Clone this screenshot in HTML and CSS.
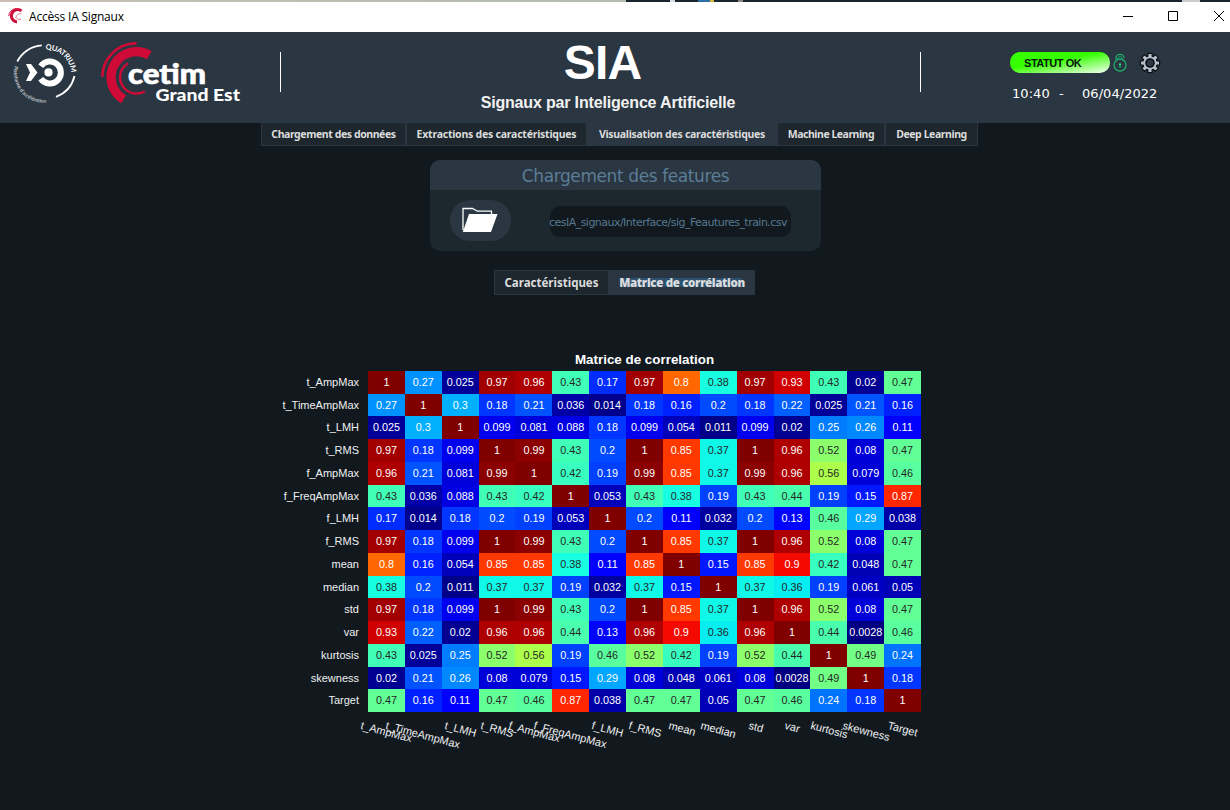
FILE: index.html
```html
<!DOCTYPE html>
<html lang="fr">
<head>
<meta charset="utf-8">
<title>Accèss IA Signaux</title>
<link rel="stylesheet" href="styles.css">
</head>
<body>
<div class="desktop-strip"><i class="s1"></i><i class="s2"></i><i class="s3"></i><i class="s4"></i><i class="s5"></i></div>
<div class="titlebar">
  <svg class="app-icon" width="16" height="16" viewBox="0 0 16 16" fill="none" stroke="#d0103c">
    <path d="M13.500 3A6.200 6.200 0 1 0 9 14" stroke-width="3"/>
    <path d="M.8 8A7.500 7.500 0 0 1 8 .8" stroke-width="1"/>
    <path d="M13.500 6A4 4 0 0 0 8 9.500Q9 12 13 11.500" stroke-width="1" stroke="#e47a92"/>
  </svg>
  <span class="app-name">Accèss IA Signaux</span>
  <svg class="controls" width="102" height="12" viewBox="0 0 102 12" fill="none" stroke="#000">
    <path d="M0 5.500h10M45.500 .5h9v9h-9zM91 0l10 10M101 0l-10 10"/>
  </svg>
</div>
<header class="header">
  <svg class="logos" width="260" height="91" viewBox="0 32 260 91">
    <defs>
      <path id="arcTop" d="M45.600 49.800A24 24 0 0 1 70.800 77"/>
      <path id="arcBottom" d="M14.600 66A30 30 0 0 0 55 100.500"/>
    </defs>
    <g fill="none" stroke="#fff">
      <path d="M17.300 61.500A29.500 29.500 0 0 1 41.800 45.300M74.500 76A29.500 29.500 0 0 1 56 96.800" stroke-width="1.800"/>
      <path d="M40.800 66.300A11 11 0 1 1 40.800 78.700" stroke-width="6"/>
    </g>
    <circle cx="48.500" cy="72.400" r="4.100" fill="#fff"/>
    <path d="M26 64h5l6.500 8.500-6.500 8.500h-5l4-8.500z" fill="#fff"/>
    <text class="quatrium"><textPath href="#arcTop" textLength="38">QUATRIUM</textPath></text>
    <text class="plateforme"><textPath href="#arcBottom" textLength="56">Plateforme d'accélération</textPath></text>
    <g fill="none" stroke="#cf0a37">
      <path d="M102.300 77A33.800 33.800 0 0 1 136.500 43.400" stroke-width="2.600"/>
      <path d="M149.300 55.200A25.400 25.400 0 1 0 123.700 99.200" stroke-width="9.300"/>
      <path d="M128 63.200A16.300 16.300 0 1 0 144.800 91.200" stroke-width="2.400"/>
    </g>
    <text class="cetim" x="128" y="83.500" textLength="78" lengthAdjust="spacingAndGlyphs">cetim</text>
    <text class="grandest" x="155.500" y="100.500" textLength="84.500" lengthAdjust="spacingAndGlyphs">Grand Est</text>
  </svg>
  <div class="headline">
    <h1>SIA</h1>
    <p>Signaux par Inteligence Artificielle</p>
  </div>
  <div class="status">
    <div class="status-row">
      <span class="pill">STATUT OK</span>
      <svg class="lock" width="14" height="20" viewBox="0 0 14 20" fill="none" stroke="#1fae6c" stroke-width="1.300">
        <circle cx="7" cy="12" r="6"/>
        <path d="M3 6.500V5.300A4 4 0 0 1 11 5.300"/>
        <path d="M4.800 6V5.800A2.200 2.200 0 0 1 9.200 5.800V6.500" stroke-width=".8"/>
        <circle cx="7" cy="11.500" r="1.200" fill="#27d07f" stroke="none"/><path d="M7 12v3"/>
      </svg>
      <svg class="gear" width="22" height="22" viewBox="-11 -11 22 22">
        <g id="gear"></g>
        <circle r="4" fill="#2a3641" stroke="#0b0d10" stroke-width="1.600"/>
      </svg>
    </div>
    <div class="clock"><span class="time">10:40</span><span class="dash">-</span><span>06/04/2022</span></div>
  </div>
</header>
<nav class="tabs">
  <span class="tab t1">Chargement des données</span>
  <span class="tab t2">Extractions des caractéristiques</span>
  <span class="tab t3 active">Visualisation des caractéristiques</span>
  <span class="tab t4">Machine Learning</span>
  <span class="tab t5">Deep Learning</span>
</nav>
<main>
  <section class="panel">
    <h2><span>Chargement des features</span></h2>
    <div class="panel-body">
      <button class="open" type="button" aria-label="Ouvrir">
        <svg width="36" height="26" viewBox="0 0 36 26">
          <path d="M1 23V1.500H10.500L15.500 4.200H29.500V7" fill="none" stroke="#fff" stroke-width="1.300"/>
          <path d="M7 7H35.500L29 25H.8z" fill="#fff"/>
        </svg>
      </button>
      <div class="path"><span>cesIA_signaux/Interface/sig_Feautures_train.csv</span></div>
    </div>
  </section>
  <nav class="subtabs">
    <span class="subtab">Caractéristiques</span>
    <span class="subtab active"><b>Matrice de corrélation</b></span>
  </nav>
  <figure class="chart">
    <figcaption>Matrice de correlation</figcaption>
    <div class="ylabels" id="ylabels"></div>
    <div class="matrix" id="matrix"></div>
    <div class="xlabels" id="xlabels"></div>
  </figure>
</main>
<script src="app.js"></script>
</body>
</html>
```

FILE: styles.css
```css
* { box-sizing: border-box; }
body {
  margin: 0;
  width: 1230px;
  height: 810px;
  overflow: hidden;
  background: #11191f;
  color: #fff;
  font-family: "Liberation Sans", Arial, sans-serif;
}
h1, h2, p, figure { margin: 0; }

.desktop-strip { height: 2px; display: flex; background: linear-gradient(90deg, #cdbdb9, #bcc0b5 35%, #b3bbb0) 0 0 / 626px 2px no-repeat #1b2530; padding-left: 670px; }
.desktop-strip i { height: 2px; }
.s1 { width: 5px; background: #ddd; margin-right: 23px; }
.s2 { width: 12px; background: #2a6fa8; }
.s3 { width: 4px; background: #d6b332; margin-right: 24px; }
.s4 { width: 5px; background: #8a8584; margin-right: 439px; }
.s5 { width: 18px; background: #ccc; }

.titlebar {
  height: 30px;
  display: flex;
  align-items: center;
  background: #fff;
  color: #000;
  padding: 0 5px 0 8px;
}
.app-icon { margin-top: -2px; }
.app-name { margin-left: 5px; font: 12px/16px "Open Sans", sans-serif; letter-spacing: -.2px; }
.controls { margin-left: auto; }

.header {
  height: 91px;
  background: #2a3641;
  display: grid;
  grid-template-columns: 280px 641px 309px;
}
.headline {
  height: 40px;
  margin-top: 20px;
  border-left: 1px solid #fff;
  border-right: 1px solid #fff;
  text-align: center;
  white-space: nowrap;
}
.headline h1 { font-size: 48px; line-height: 50px; margin-top: -14px; padding-left: 4px; letter-spacing: -.8px; }
.headline p { font-size: 16px; font-weight: bold; line-height: 20px; margin-top: 5px; padding-left: 15px; letter-spacing: -.17px; color: #f2f2f2; }

.status { padding: 19px 0 0 89px; }
.status-row { display: flex; align-items: center; height: 23px; }
.pill {
  width: 100px;
  height: 21px;
  border-radius: 10px;
  padding-left: 14px;
  font-size: 11px;
  line-height: 22px;
  font-weight: bold;
  letter-spacing: -.45px;
  color: #06170a;
  background: linear-gradient(170deg, #35ff00 0 42%, #e8ffe2 96%);
}
.lock { margin-left: 3px; }
.gear { margin-left: 12px; }
.clock { display: flex; margin: 12px 0 0 2px; font: 13px/16px "DejaVu Sans", sans-serif; letter-spacing: .05px; white-space: nowrap; }
.time { width: 47px; }
.dash { width: 23px; }

.tabs { display: grid; grid-template-columns: 145px 181px 190px 108px 93px; width: 717px; height: 23px; margin-left: 261px; }
.tab, .subtab {
  display: flex;
  align-items: center;
  justify-content: center;
  white-space: nowrap;
  border: solid #2a3641;
  border-width: 0 1px 1px;
  background: #1d272d;
  color: #dcdcdc;
  font: bold 10.500px/14px "Noto Sans", sans-serif;
}
.t1 { letter-spacing: -.42px; }
.t2 { letter-spacing: -.23px; }
.t3 { letter-spacing: -.27px; }
.t4 { letter-spacing: -.48px; }
.t5 { letter-spacing: -.42px; }
.tab.active, .subtab.active { background: #2a3641; }

.panel { width: 391px; height: 91px; margin: 14px 0 0 430px; border-radius: 10px; overflow: hidden; background: #1c272e; }
.panel h2 { height: 30px; background: #2a3641; color: #5c7d97; text-align: center; font: 17px/33px "DejaVu Sans", sans-serif; letter-spacing: -.4px; }
.panel-body { display: flex; padding: 10px 20px; }
.open { display: block; width: 61px; height: 41px; border: 0; border-radius: 20px; background: #2a3641; padding: 0 0 1px 12px; text-align: left; }
.open svg { display: block; margin-top: -1px; }
.path {
  width: 241px;
  height: 31px;
  margin: 6px 0 0 39px;
  padding-right: 4px;
  border-radius: 10px;
  display: flex;
  justify-content: flex-end;
  background: #11191f;
  color: #57788f;
  font: 11px/33px "DejaVu Sans", sans-serif;
  letter-spacing: -.53px;
}

.subtabs { display: grid; grid-template-columns: 115px 146px; width: 261px; height: 25px; margin: 19px 0 0 494px; }
.subtab { border-width: 1px; font-size: 11.500px; line-height: 16px; padding-top: 1px; }
.subtab b { background: linear-gradient(#2c516f, #2c516f) 3px 3px / calc(100% - 6px) 9px no-repeat; letter-spacing: -.32px; }

.chart {
  display: grid;
  grid-template-columns: 86px 553px;
  grid-template-rows: 18px 341px 50px;
  column-gap: 8px;
  margin: 58px 0 0 273.500px;
  font-size: 11px;
}
.ylabels, .matrix, .xlabels, .chart figcaption { margin-left: .5px; margin-right: -.5px; }
.ylabels { margin-left: -.5px; margin-right: .5px; }
.chart figcaption { grid-column: 2; text-align: center; font-size: 13.400px; line-height: 14px; font-weight: bold; }
.ylabels { display: grid; grid-template-rows: repeat(15, 1fr); text-align: right; line-height: 22px; color: #f0f0f0; }
.matrix { display: grid; grid-template: repeat(15, 1fr) / repeat(15, 1fr); text-align: center; line-height: 22px; }
.cell { min-width: 0; min-height: 0; white-space: nowrap; font-size: 10.800px; display: flex; justify-content: center; }
.light { color: #fff; }
.dark { color: #262626; }
.xlabels { grid-column: 2; display: grid; grid-template-columns: repeat(15, 1fr); padding-top: 7px; color: #f0f0f0; }
.xlabel { min-width: 0; display: flex; justify-content: center; }
.xlabel span { height: 13px; line-height: 13px; white-space: nowrap; transform-origin: 0 0; transform: translateX(2.500px) rotate(15deg); }

.quatrium { font: bold 7.500px Lato, sans-serif; fill: #fff; }
.plateforme { font: 5px Lato, sans-serif; fill: #e6e9eb; }
.cetim { font: 900 28px Lato, sans-serif; fill: #fff; stroke: #fff; stroke-width: .7px; }
.grandest { font: 900 17.500px Lato, sans-serif; fill: #fff; }
```

FILE: app.js
```js
const names = ["t_AmpMax", "t_TimeAmpMax", "t_LMH", "t_RMS", "f_AmpMax", "f_FreqAmpMax", "f_LMH", "f_RMS",
  "mean", "median", "std", "var", "kurtosis", "skewness", "Target"];

// Lower triangle of the correlation matrix, diagonal included.
const lower = [
  "1",
  "0.27 1",
  "0.025 0.3 1",
  "0.97 0.18 0.099 1",
  "0.96 0.21 0.081 0.99 1",
  "0.43 0.036 0.088 0.43 0.42 1",
  "0.17 0.014 0.18 0.2 0.19 0.053 1",
  "0.97 0.18 0.099 1 0.99 0.43 0.2 1",
  "0.8 0.16 0.054 0.85 0.85 0.38 0.11 0.85 1",
  "0.38 0.2 0.011 0.37 0.37 0.19 0.032 0.37 0.15 1",
  "0.97 0.18 0.099 1 0.99 0.43 0.2 1 0.85 0.37 1",
  "0.93 0.22 0.02 0.96 0.96 0.44 0.13 0.96 0.9 0.36 0.96 1",
  "0.43 0.025 0.25 0.52 0.56 0.19 0.46 0.52 0.42 0.19 0.52 0.44 1",
  "0.02 0.21 0.26 0.08 0.079 0.15 0.29 0.08 0.048 0.061 0.08 0.0028 0.49 1",
  "0.47 0.16 0.11 0.47 0.46 0.87 0.038 0.47 0.47 0.05 0.47 0.46 0.24 0.18 1"
].map(r => r.split(" "));

// Jet colour map as piecewise linear channels.
const channels = [
  [[0, 0], [.35, 0], [.66, 1], [.89, 1], [1, .5]],
  [[0, 0], [.125, 0], [.375, 1], [.64, 1], [.91, 0], [1, 0]],
  [[0, .5], [.11, 1], [.34, 1], [.65, 0], [1, 0]]
];
function channel(stops, t) {
  for (let i = 1; i < stops.length; i++) {
    const [x0, y0] = stops[i - 1], [x1, y1] = stops[i];
    if (t <= x1) return y0 + (y1 - y0) * (t - x0) / (x1 - x0);
  }
  return stops[stops.length - 1][1];
}
function luminance(rgb) {
  const l = rgb.map(c => c <= .03928 ? c / 12.92 : Math.pow((c + .055) / 1.055, 2.4));
  return .2126 * l[0] + .7152 * l[1] + .0722 * l[2];
}

function add(parent, cls, text) {
  const el = document.createElement("div");
  el.className = cls;
  el.textContent = text;
  parent.appendChild(el);
  return el;
}

const matrix = document.getElementById("matrix");
names.forEach((name, r) => {
  add(document.getElementById("ylabels"), "ylabel", name);
  const x = add(document.getElementById("xlabels"), "xlabel", "");
  const s = document.createElement("span");
  s.textContent = name;
  x.appendChild(s);
  names.forEach((_, c) => {
    const v = r >= c ? lower[r][c] : lower[c][r];
    const rgb = channels.map(ch => channel(ch, (v - .0028) / .9972));
    const cell = add(matrix, "cell " + (luminance(rgb) > .408 ? "dark" : "light"), v);
    cell.style.background = "rgb(" + rgb.map(k => Math.round(k * 255)).join(",") + ")";
  });
});

// Gear outline: eight trapezoid teeth around a disc.
let d = "";
for (let i = 0; i < 8; i++) {
  const a = i * Math.PI / 4;
  [[-.3, 7.2], [-.22, 9.9], [.22, 9.9], [.3, 7.2]].forEach(([o, q], k) => {
    d += (i + k ? "L" : "M") + (q * Math.sin(a + o)).toFixed(2) + " " + (-q * Math.cos(a + o)).toFixed(2);
  });
}
document.getElementById("gear").innerHTML =
  '<path d="' + d + 'z" fill="#b4bfcb" stroke="#0b0d10" stroke-width="1.2" stroke-linejoin="round"/>';
```
